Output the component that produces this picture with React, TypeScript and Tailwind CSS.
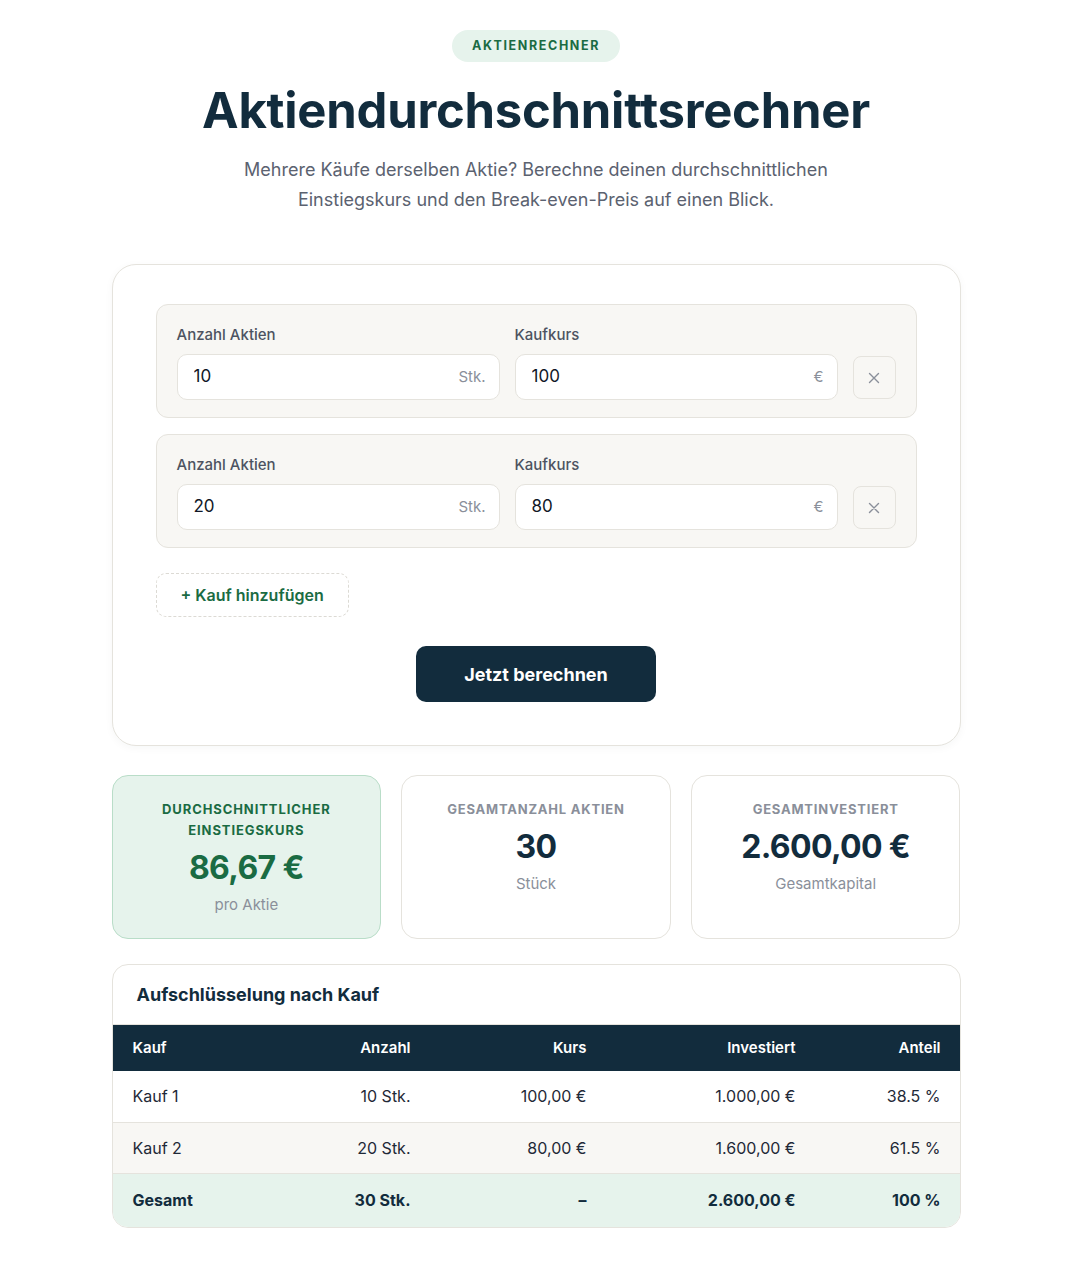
import { useState } from "react";

type Row = { id: number; shares: string; price: string };

const fmt = (n: number) =>
  n.toLocaleString("de-DE", { minimumFractionDigits: 2, maximumFractionDigits: 2 });

export default function App() {
  const [rows, setRows] = useState<Row[]>([
    { id: 1, shares: "10", price: "100" },
    { id: 2, shares: "20", price: "80" },
  ]);

  const update = (id: number, key: "shares" | "price", value: string) => {
    setRows((prev) => prev.map((r) => (r.id === id ? { ...r, [key]: value } : r)));
  };

  const remove = (id: number) => setRows((prev) => prev.filter((r) => r.id !== id));

  const add = () =>
    setRows((prev) => [...prev, { id: Date.now(), shares: "", price: "" }]);

  const parsed = rows.map((r, i) => {
    const s = parseFloat(r.shares) || 0;
    const p = parseFloat(r.price) || 0;
    return { label: `Kauf ${i + 1}`, s, p, inv: s * p };
  });
  const totalShares = parsed.reduce((a, r) => a + r.s, 0);
  const totalInv = parsed.reduce((a, r) => a + r.inv, 0);
  const avg = totalShares ? totalInv / totalShares : 0;

  return (
    <div
      className="min-h-screen bg-white flex flex-col items-center pt-[30px] pb-10 pr-5"
      style={{ fontFamily: "Inter, 'Noto Sans', sans-serif" }}
    >
      {/* Header */}
      <span className="h-8 px-5 flex items-center rounded-full bg-[#e6f3ec] text-[#1a6b43] text-[12.5px] font-bold tracking-[0.13em] uppercase">
        Aktienrechner
      </span>
      <h1 className="mt-[20px] text-[49px] leading-[58px] font-bold tracking-[-0.005em] text-[#122c3d]">
        Aktiendurchschnittsrechner
      </h1>
      <p className="mt-[15px] text-center text-[18px] leading-[30px] text-[#5b6270] max-w-[620px]">
        Mehrere Käufe derselben Aktie? Berechne deinen durchschnittlichen
        <br />
        Einstiegskurs und den Break-even-Preis auf einen Blick.
      </p>

      {/* Calculator card */}
      <div className="mt-[49px] w-[849px] rounded-[24px] border border-[#e5e3dd] bg-white px-[43px] pt-[39px] pb-[43px] shadow-[0_2px_8px_rgba(18,44,61,0.04)]">
        <div className="flex flex-col gap-4">
          {rows.map((r) => (
            <div
              key={r.id}
              className="rounded-[12px] border border-[#e5e3dd] bg-[#f8f7f4] pl-5 pr-[20px] pt-[20px] pb-[17px] flex items-end gap-[15px]"
            >
              <label className="flex-1 min-w-0 flex flex-col gap-[9px]">
                <span className="text-[15px] leading-5 font-medium text-[#4d5361]">Anzahl Aktien</span>
                <div className="h-[46px] rounded-[10px] border border-[#e5e3dd] bg-white flex items-center pl-4 pr-[13px]">
                  <input
                    value={r.shares}
                    onChange={(e) => update(r.id, "shares", e.target.value)}
                    className="w-full flex-1 min-w-0 bg-transparent outline-none text-[17px] text-[#111827]"
                  />
                  <span className="text-[15px] text-[#8a8f9a]">Stk.</span>
                </div>
              </label>
              <label className="flex-1 min-w-0 flex flex-col gap-[9px]">
                <span className="text-[15px] leading-5 font-medium text-[#4d5361]">Kaufkurs</span>
                <div className="h-[46px] rounded-[10px] border border-[#e5e3dd] bg-white flex items-center pl-4 pr-[13px]">
                  <input
                    value={r.price}
                    onChange={(e) => update(r.id, "price", e.target.value)}
                    className="w-full flex-1 min-w-0 bg-transparent outline-none text-[17px] text-[#111827]"
                  />
                  <span className="text-[15px] text-[#8a8f9a]">€</span>
                </div>
              </label>
              <button
                type="button"
                onClick={() => remove(r.id)}
                className="mb-[1px] w-[43px] h-[43px] shrink-0 rounded-[8px] border border-[#e5e3dd] bg-[#f8f7f4] flex items-center justify-center text-[#8a8f9a]"
              >
                <svg width="12" height="12" viewBox="0 0 12 12" fill="none">
                  <path d="M1.5 1.5l9 9M10.5 1.5l-9 9" stroke="currentColor" strokeWidth="1.4" strokeLinecap="round" />
                </svg>
              </button>
            </div>
          ))}
        </div>

        <button
          type="button"
          onClick={add}
          className="mt-[25px] h-[44px] px-6 rounded-[10px] border border-dashed border-[#dcdad4] text-[#1a6b43] text-[16px] font-semibold"
        >
          + Kauf hinzufügen
        </button>

        <div className="mt-[29px] flex justify-center">
          <button
            type="button"
            className="w-[240px] h-[56px] rounded-[10px] bg-[#122c3d] text-white text-[18px] font-bold"
          >
            Jetzt berechnen
          </button>
        </div>
      </div>

      {/* Stats */}
      <div className="mt-[29px] w-[849px] grid grid-cols-3 gap-5">
        <div className="h-[164px] rounded-[16px] border border-[#b9ddc8] bg-[#e6f3ec] flex flex-col items-center pt-[23px] text-center">
          <span className="text-[13px] leading-[21px] font-bold tracking-[0.07em] text-[#1a6b43] uppercase">
            Durchschnittlicher
            <br />
            Einstiegskurs
          </span>
          <span className="mt-[7px] text-[32px] leading-[40px] font-bold tracking-[-0.02em] text-[#1a6b43]">
            {fmt(avg)} €
          </span>
          <span className="mt-[6px] text-[15px] text-[#8a8f9a]">pro Aktie</span>
        </div>
        <div className="h-[164px] rounded-[16px] border border-[#e5e3dd] bg-white flex flex-col items-center pt-[23px] text-center">
          <span className="text-[13px] leading-[21px] font-bold tracking-[0.06em] text-[#8a8f9a] uppercase">
            Gesamtanzahl Aktien
          </span>
          <span className="mt-[7px] text-[32px] leading-[40px] font-bold tracking-[-0.02em] text-[#122c3d]">
            {totalShares}
          </span>
          <span className="mt-[6px] text-[15px] text-[#8a8f9a]">Stück</span>
        </div>
        <div className="h-[164px] rounded-[16px] border border-[#e5e3dd] bg-white flex flex-col items-center pt-[23px] text-center">
          <span className="text-[13px] leading-[21px] font-bold tracking-[0.06em] text-[#8a8f9a] uppercase">
            Gesamtinvestiert
          </span>
          <span className="mt-[7px] text-[32px] leading-[40px] font-bold tracking-[-0.02em] text-[#122c3d]">
            {fmt(totalInv)} €
          </span>
          <span className="mt-[6px] text-[15px] text-[#8a8f9a]">Gesamtkapital</span>
        </div>
      </div>

      {/* Breakdown table */}
      <div className="mt-[25px] w-[849px] rounded-[16px] border border-[#e5e3dd] bg-white overflow-hidden">
        <h2 className="h-[60px] flex items-center px-6 text-[18px] font-bold text-[#122c3d] border-b border-[#e5e3dd]">
          Aufschlüsselung nach Kauf
        </h2>
        <table className="w-full table-fixed text-[16px] text-[#1f2937]">
          <colgroup>
            <col className="w-[160px]" />
            <col className="w-[158px]" />
            <col className="w-[176px]" />
            <col className="w-[209px]" />
            <col className="w-[145px]" />
          </colgroup>
          <thead>
            <tr className="h-[46px] bg-[#122c3d] text-white text-[15px] font-semibold">
              <th className="px-5 text-left font-semibold">Kauf</th>
              <th className="px-5 text-right font-semibold">Anzahl</th>
              <th className="px-5 text-right font-semibold">Kurs</th>
              <th className="px-5 text-right font-semibold">Investiert</th>
              <th className="px-5 text-right font-semibold">Anteil</th>
            </tr>
          </thead>
          <tbody>
            {parsed.map((r, i) => (
              <tr
                key={r.label}
                className={`h-[51px] border-b border-[#e5e3dd] ${i % 2 === 1 ? "bg-[#f8f7f4]" : "bg-white"}`}
              >
                <td className="px-5">{r.label}</td>
                <td className="px-5 text-right">{r.s} Stk.</td>
                <td className="px-5 text-right">{fmt(r.p)} €</td>
                <td className="px-5 text-right">{fmt(r.inv)} €</td>
                <td className="px-5 text-right">
                  {totalInv ? ((r.inv / totalInv) * 100).toFixed(1) : "0.0"} %
                </td>
              </tr>
            ))}
            <tr className="h-[54px] bg-[#e6f3ec] font-bold text-[#122c3d]">
              <td className="px-5">Gesamt</td>
              <td className="px-5 text-right">{totalShares} Stk.</td>
              <td className="px-5 text-right">–</td>
              <td className="px-5 text-right">{fmt(totalInv)} €</td>
              <td className="px-5 text-right">100 %</td>
            </tr>
          </tbody>
        </table>
      </div>
    </div>
  );
}
